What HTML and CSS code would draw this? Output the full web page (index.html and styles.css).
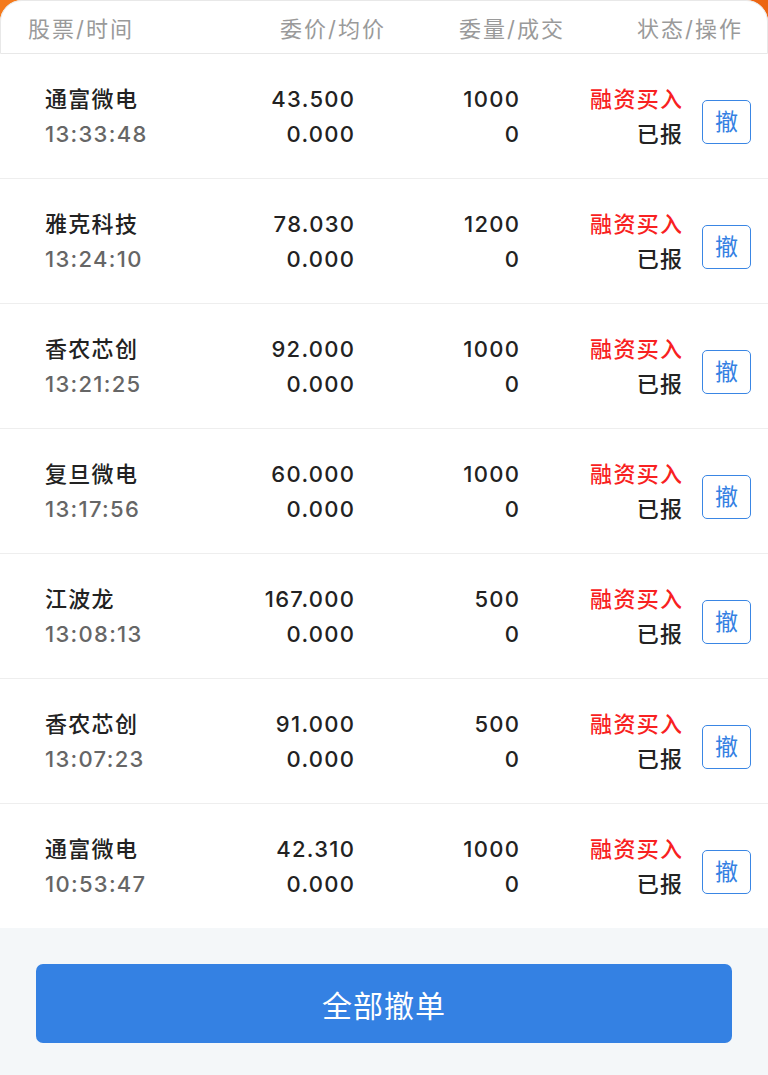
FILE: index.html
```html
<!DOCTYPE html>
<html lang="zh-CN">
<head>
<meta charset="utf-8">
<title>委托撤单</title>
<link rel="stylesheet" href="styles.css">
</head>
<body>
<div class="page">
  <div class="card">
    <div class="head">
      <div class="h-name">股票/时间</div>
      <div class="h-col">委价/均价</div>
      <div class="h-col">委量/成交</div>
      <div class="h-col">状态/操作</div>
    </div>
    <div class="list">
      <div class="row">
        <div class="c-name"><div class="name">通富微电</div><div class="time">13:33:48</div></div>
        <div class="c-num"><div>43.500</div><div>0.000</div></div>
        <div class="c-num"><div>1000</div><div>0</div></div>
        <div class="c-stat"><div class="buy">融资买入</div><div>已报</div></div>
        <button class="cancel">撤</button>
      </div>
      <div class="row">
        <div class="c-name"><div class="name">雅克科技</div><div class="time">13:24:10</div></div>
        <div class="c-num"><div>78.030</div><div>0.000</div></div>
        <div class="c-num"><div>1200</div><div>0</div></div>
        <div class="c-stat"><div class="buy">融资买入</div><div>已报</div></div>
        <button class="cancel">撤</button>
      </div>
      <div class="row">
        <div class="c-name"><div class="name">香农芯创</div><div class="time">13:21:25</div></div>
        <div class="c-num"><div>92.000</div><div>0.000</div></div>
        <div class="c-num"><div>1000</div><div>0</div></div>
        <div class="c-stat"><div class="buy">融资买入</div><div>已报</div></div>
        <button class="cancel">撤</button>
      </div>
      <div class="row">
        <div class="c-name"><div class="name">复旦微电</div><div class="time">13:17:56</div></div>
        <div class="c-num"><div>60.000</div><div>0.000</div></div>
        <div class="c-num"><div>1000</div><div>0</div></div>
        <div class="c-stat"><div class="buy">融资买入</div><div>已报</div></div>
        <button class="cancel">撤</button>
      </div>
      <div class="row">
        <div class="c-name"><div class="name">江波龙</div><div class="time">13:08:13</div></div>
        <div class="c-num"><div>167.000</div><div>0.000</div></div>
        <div class="c-num"><div>500</div><div>0</div></div>
        <div class="c-stat"><div class="buy">融资买入</div><div>已报</div></div>
        <button class="cancel">撤</button>
      </div>
      <div class="row">
        <div class="c-name"><div class="name">香农芯创</div><div class="time">13:07:23</div></div>
        <div class="c-num"><div>91.000</div><div>0.000</div></div>
        <div class="c-num"><div>500</div><div>0</div></div>
        <div class="c-stat"><div class="buy">融资买入</div><div>已报</div></div>
        <button class="cancel">撤</button>
      </div>
      <div class="row last">
        <div class="c-name"><div class="name">通富微电</div><div class="time">10:53:47</div></div>
        <div class="c-num"><div>42.310</div><div>0.000</div></div>
        <div class="c-num"><div>1000</div><div>0</div></div>
        <div class="c-stat"><div class="buy">融资买入</div><div>已报</div></div>
        <button class="cancel">撤</button>
      </div>
    </div>
  </div>
  <div class="footer">
    <button class="cancel-all">全部撤单</button>
  </div>
</div>
</body>
</html>
```
FILE: styles.css
```css
html, body {
  margin: 0;
  padding: 0;
}
body {
  background: linear-gradient(90deg, #f47a1c, #ec6512);
  font-family: "Inter", "Noto Sans CJK SC", sans-serif;
  color: #222;
  width: 768px;
  height: 1075px;
  overflow: hidden;
}
.page {
  display: flex;
  flex-direction: column;
  height: 1075px;
}
.card {
  background: #fff;
  border-radius: 22px 22px 0 0;
}
.head {
  display: grid;
  grid-template-columns: 203px 153px 179px 178px;
  height: 52px;
  align-items: center;
  padding: 0 28px 0 27px;
  border: 1px solid #e8e8e8;
  border-radius: 22px 22px 0 0;
  color: #9a9a9a;
  font-size: 22px;
  letter-spacing: 2px;
}
.h-col {
  text-align: right;
  margin-right: -2px;
}
.row {
  display: grid;
  grid-template-columns: 155px 154px 165px 163px 69px;
  padding: 28px 17px 26px 45px;
  border-bottom: 1px solid #eeeeee;
  font-size: 22px;
  line-height: 35px;
  font-weight: 500;
  letter-spacing: 1.3px;
}
.row.last {
  border-bottom: none;
}
.c-name .time {
  color: #666;
}
.c-num {
  text-align: right;
  margin-right: -1.3px;
}
.c-stat {
  text-align: right;
  margin-right: -1.3px;
}
.buy {
  color: #f82121;
}
.cancel {
  align-self: start;
  margin-top: 18px;
  margin-left: 20px;
  width: 49px;
  height: 44px;
  box-sizing: border-box;
  border: 1.5px solid #3a86e4;
  border-radius: 5px;
  background: #fff;
  color: #3481e3;
  font-family: "Noto Sans CJK SC", sans-serif;
  font-size: 23px;
  padding: 0 0 3px;
  line-height: 1;
}
.footer {
  flex: 1;
  background: #f4f7f9;
  padding: 36px 36px 0;
}
.cancel-all {
  display: block;
  width: 100%;
  height: 79px;
  border: none;
  border-radius: 7px;
  background: #3481e3;
  color: #fff;
  font-family: "Noto Sans CJK SC", sans-serif;
  font-size: 30px;
  letter-spacing: 1px;
}
```
